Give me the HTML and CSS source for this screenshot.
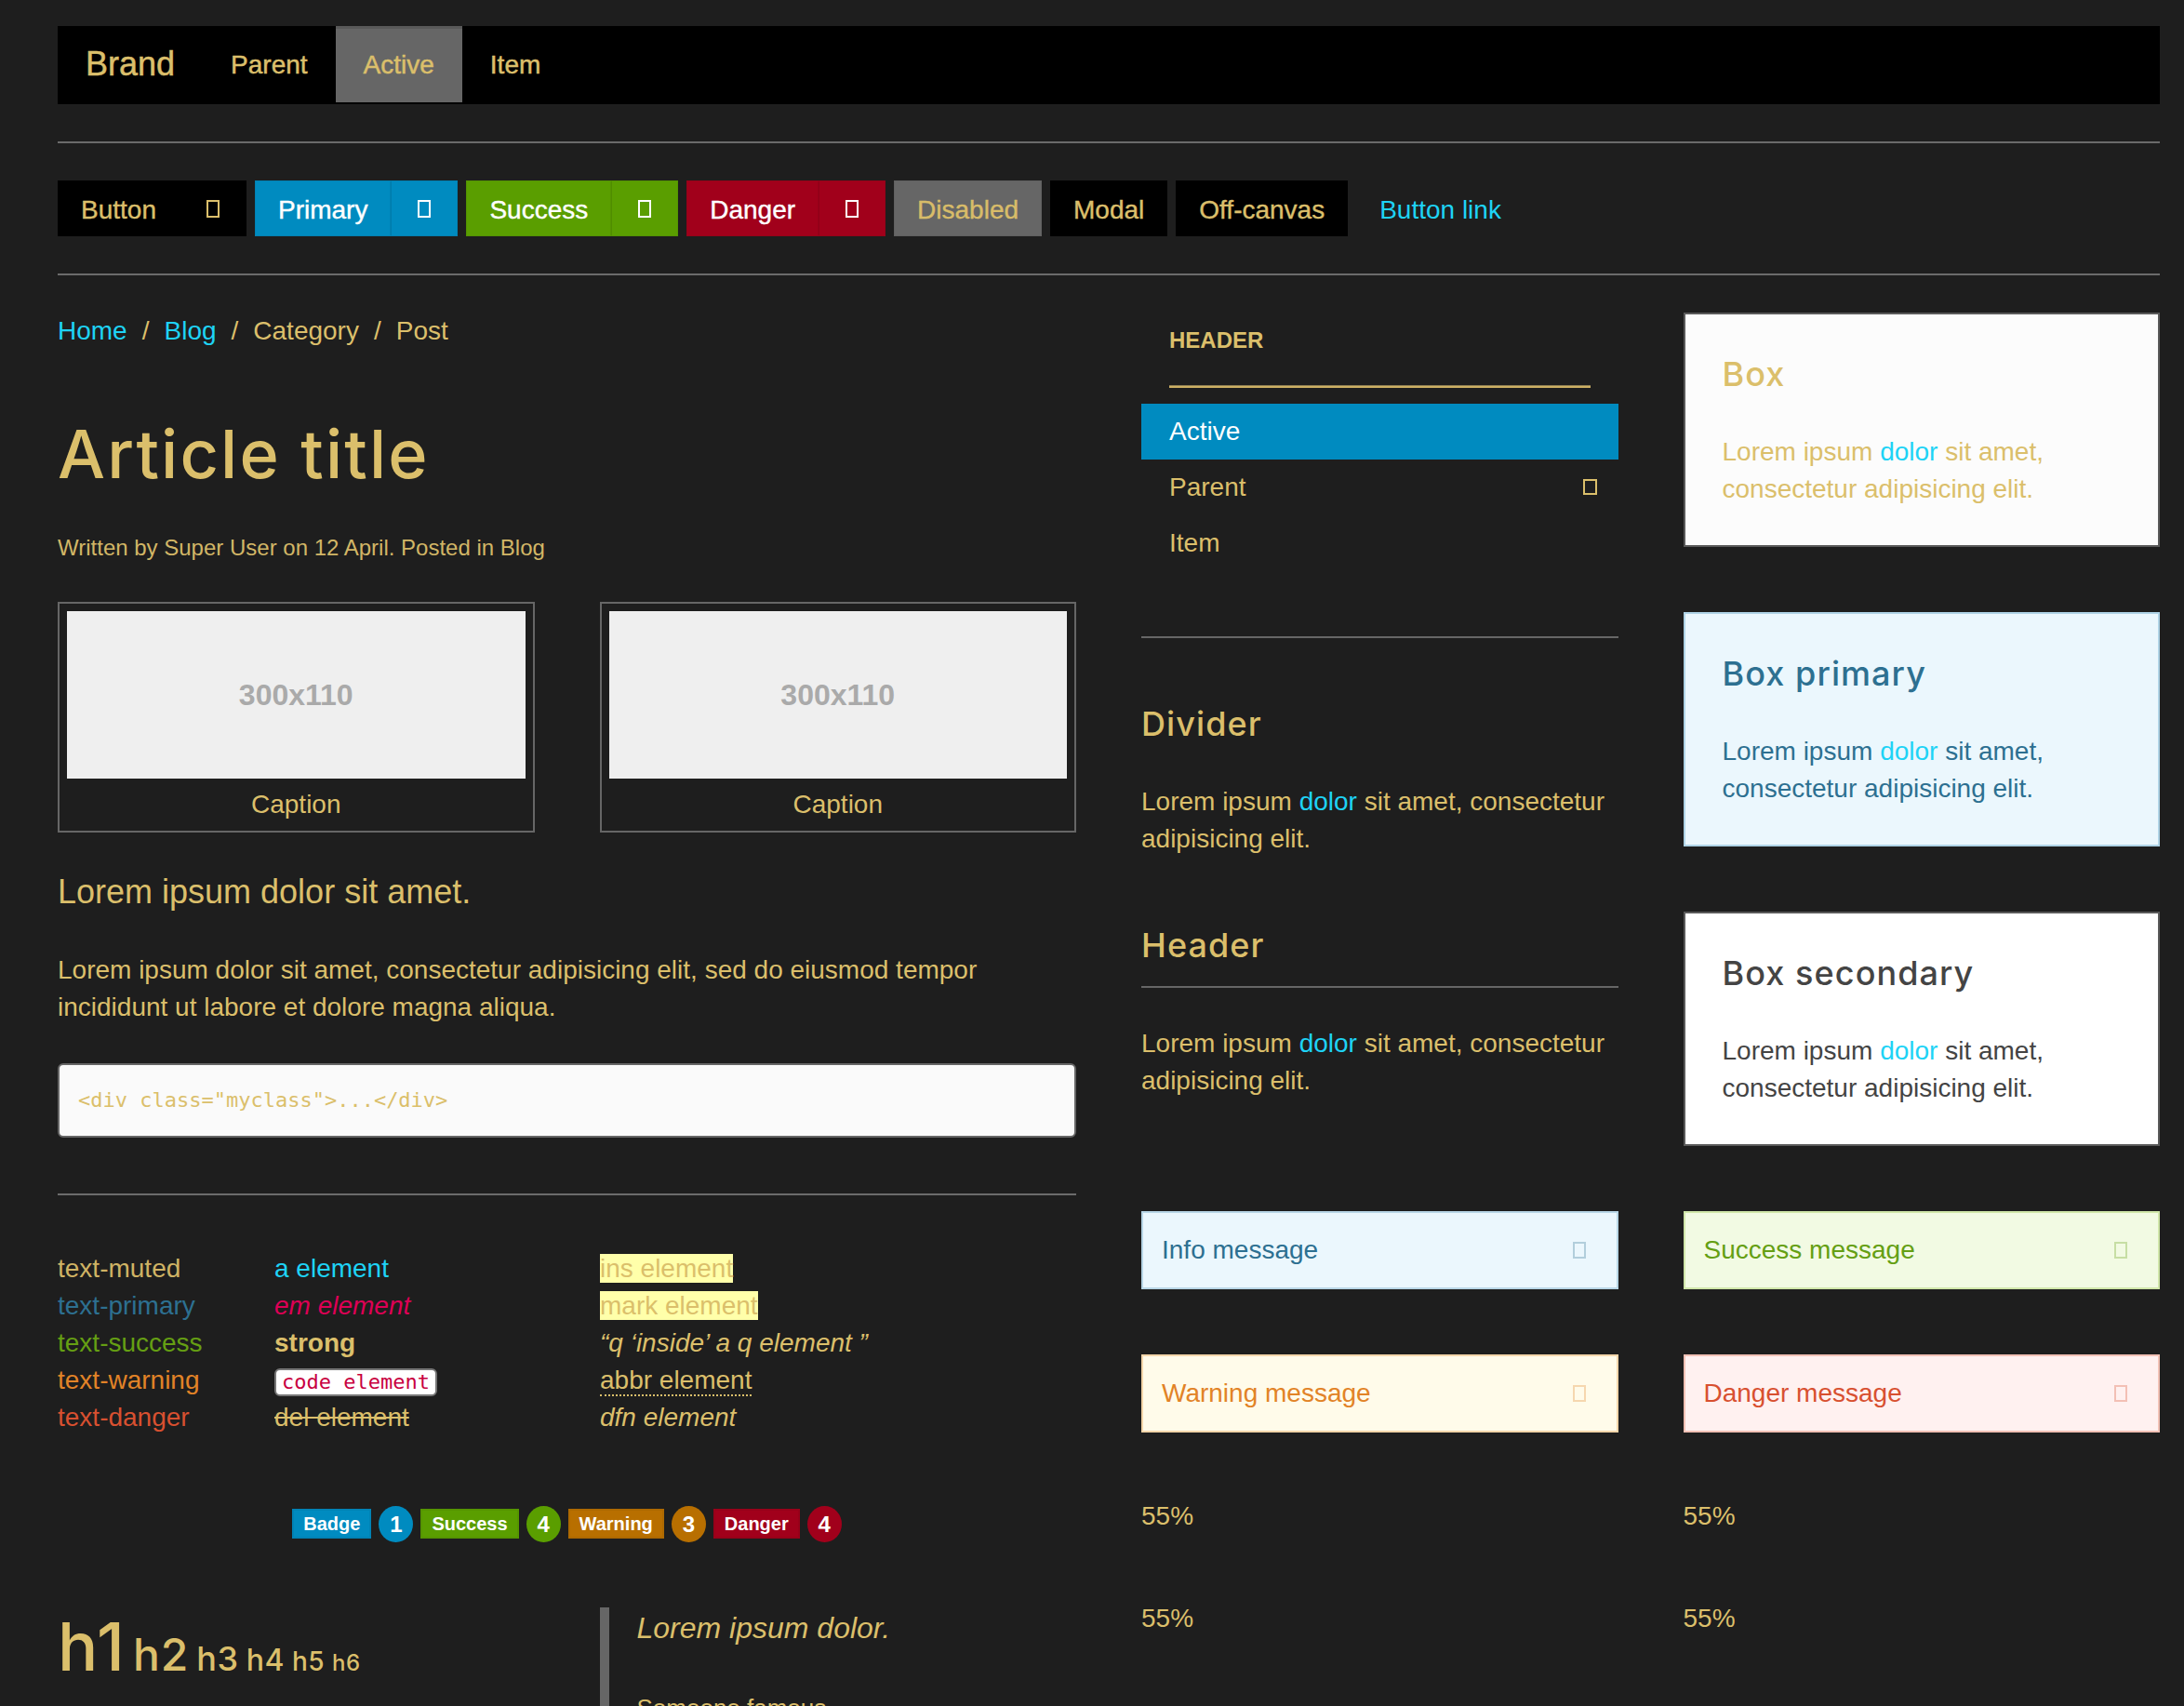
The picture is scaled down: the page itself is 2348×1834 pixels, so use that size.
FILE: index.html
```html
<!DOCTYPE html>
<html lang="en">
<head>
<meta charset="utf-8">
<title>Theme test</title>
<link rel="stylesheet" href="styles.css">
</head>
<body>
<div class="page">
  <nav class="navbar">
    <a class="brand">Brand</a>
    <ul class="navbar-nav">
      <li><a>Parent</a></li>
      <li class="active"><a>Active</a></li>
      <li><a>Item</a></li>
    </ul>
  </nav>

  <hr class="rule">

  <div class="buttons">
    <div class="btn-group"><a class="btn">Button</a><a class="btn btn-icon"><span class="tofu"></span></a></div>
    <div class="btn-group"><a class="btn btn-primary">Primary</a><a class="btn btn-primary btn-icon"><span class="tofu"></span></a></div>
    <div class="btn-group"><a class="btn btn-success">Success</a><a class="btn btn-success btn-icon"><span class="tofu"></span></a></div>
    <div class="btn-group"><a class="btn btn-danger">Danger</a><a class="btn btn-danger btn-icon"><span class="tofu"></span></a></div>
    <a class="btn btn-disabled">Disabled</a>
    <a class="btn">Modal</a>
    <a class="btn">Off-canvas</a>
    <a class="btn btn-link">Button link</a>
  </div>

  <hr class="rule">

  <div class="main">
    <div class="col-left">
      <ul class="breadcrumb">
        <li><a>Home</a></li>
        <li><a>Blog</a></li>
        <li><span>Category</span></li>
        <li><span>Post</span></li>
      </ul>

      <h1 class="article-title">Article title</h1>
      <p class="meta">Written by Super User on 12 April. Posted in Blog</p>

      <div class="figures">
        <figure class="thumb">
          <div class="ph">300x110</div>
          <figcaption class="thumb-caption">Caption</figcaption>
        </figure>
        <figure class="thumb">
          <div class="ph">300x110</div>
          <figcaption class="thumb-caption">Caption</figcaption>
        </figure>
      </div>

      <p class="lead">Lorem ipsum dolor sit amet.</p>
      <p class="para">Lorem ipsum dolor sit amet, consectetur adipisicing elit, sed do eiusmod tempor incididunt ut labore et dolore magna aliqua.</p>

      <pre class="code-block">&lt;div class="myclass"&gt;...&lt;/div&gt;</pre>

      <hr class="rule rule-wide">

      <div class="text-grid">
        <div class="tg-col">
          <div class="t-muted">text-muted</div>
          <div class="t-primary">text-primary</div>
          <div class="t-success">text-success</div>
          <div class="t-warning">text-warning</div>
          <div class="t-danger">text-danger</div>
        </div>
        <div class="tg-col">
          <div><a>a element</a></div>
          <div><em class="em">em element</em></div>
          <div><strong>strong</strong></div>
          <div><code class="code">code element</code></div>
          <div><del>del element</del></div>
        </div>
        <div class="tg-col">
          <div><ins class="hl">ins element</ins></div>
          <div><mark class="hl">mark element</mark></div>
          <div><span class="q">&ldquo;q &lsquo;inside&rsquo; a q element &rdquo;</span></div>
          <div><abbr class="abbr">abbr element</abbr></div>
          <div><dfn>dfn element</dfn></div>
        </div>
      </div>

      <div class="badges">
        <span class="badge b-blue">Badge</span>
        <span class="badge-n b-blue">1</span>
        <span class="badge b-green">Success</span>
        <span class="badge-n b-green">4</span>
        <span class="badge b-orange">Warning</span>
        <span class="badge-n b-orange">3</span>
        <span class="badge b-red">Danger</span>
        <span class="badge-n b-red">4</span>
      </div>

      <div class="heading-row">
        <div class="hrow"><span class="hx h1">h1</span> <span class="hx h2">h2</span> <span class="hx h3">h3</span> <span class="hx h4">h4</span> <span class="hx h5">h5</span> <span class="hx h6">h6</span></div>
        <blockquote class="quote">
          <p>Lorem ipsum dolor.</p>
          <small>Someone famous</small>
        </blockquote>
      </div>
    </div>

    <div class="col-right">
      <div class="mid-stack">
        <ul class="side-nav">
          <li class="nav-header">Header</li>
          <li class="nav-rule"></li>
          <li class="nav-active"><a>Active</a></li>
          <li><a>Parent<span class="tofu tofu-nav"></span></a></li>
          <li><a>Item</a></li>
        </ul>

        <div class="panel panel-divider">
          <h3 class="panel-title">Divider</h3>
          <p>Lorem ipsum <a>dolor</a> sit amet, consectetur adipisicing elit.</p>
        </div>

        <div class="panel panel-header">
          <h3 class="panel-title">Header</h3>
          <p>Lorem ipsum <a>dolor</a> sit amet, consectetur adipisicing elit.</p>
        </div>
      </div>

      <div class="box-stack">
        <div class="box">
          <h3 class="panel-title">Box</h3>
          <p>Lorem ipsum <a>dolor</a> sit amet, consectetur adipisicing elit.</p>
        </div>
        <div class="box box-primary">
          <h3 class="panel-title">Box primary</h3>
          <p>Lorem ipsum <a>dolor</a> sit amet, consectetur adipisicing elit.</p>
        </div>
        <div class="box box-secondary">
          <h3 class="panel-title">Box secondary</h3>
          <p>Lorem ipsum <a>dolor</a> sit amet, consectetur adipisicing elit.</p>
        </div>
      </div>

      <div class="alert alert-info"><span>Info message</span><span class="close"><span class="tofu"></span></span></div>
      <div class="alert alert-success"><span>Success message</span><span class="close"><span class="tofu"></span></span></div>
      <div class="alert alert-warning"><span>Warning message</span><span class="close"><span class="tofu"></span></span></div>
      <div class="alert alert-danger"><span>Danger message</span><span class="close"><span class="tofu"></span></span></div>

      <div class="progress-label">55%</div>
      <div class="progress-label">55%</div>
      <div class="progress-label">55%</div>
      <div class="progress-label">55%</div>
    </div>
  </div>
</div>
</body>
</html>
```

FILE: styles.css
```css
* { box-sizing: border-box; }

html, body {
  margin: 0;
  background: #1e1e1e;
}

body {
  font-family: "Liberation Sans", Arial, sans-serif;
  font-size: 28px;
  line-height: 40px;
  color: #dbbf6b;
}

a { color: #1ed3f6; text-decoration: none; }
p { margin: 0; }
ul { list-style: none; margin: 0; padding: 0; }

.page {
  padding: 28px 26px 0 62px;
}

/* Navbar */
.navbar {
  display: flex;
  align-items: flex-start;
  height: 84px;
  background: #000;
}
.brand {
  display: block;
  height: 82px;
  line-height: 82px;
  padding: 0 30px;
  font-size: 36px;
  color: #dbbf6b;
  -webkit-text-stroke: 0.5px currentColor;
}
.navbar-nav { display: flex; }
.navbar-nav a {
  display: block;
  height: 82px;
  line-height: 84px;
  padding: 0 30px;
  color: #dbbf6b;
  -webkit-text-stroke: 0.5px currentColor;
}
.navbar-nav .active a {
  background: #666;
  box-shadow: inset 0 3px 0 rgba(0,0,0,.12);
}

.rule {
  border: 0;
  height: 2px;
  background: #6b6b6b;
  margin: 40px 0;
}
.rule-wide { margin: 60px 0 59px; }

/* Buttons */
.buttons {
  display: flex;
  align-items: center;
  gap: 9px;
}
.btn-group { display: flex; }
.btn {
  display: block;
  height: 60px;
  line-height: 62px;
  padding: 0 24px;
  border: 1px solid rgba(0,0,0,.06);
  background: #000;
  color: #dbbf6b;
  font-size: 28px;
  white-space: nowrap;
  -webkit-text-stroke: 0.4px currentColor;
}
.btn-icon {
  width: 72px;
  padding: 0;
  display: flex;
  align-items: center;
  justify-content: center;
  border-left: 1px solid rgba(0,0,0,.1);
}
.btn-primary { background: #008bc0; color: #fff; }
.btn-success { background: #5a9e00; color: #fff; }
.btn-danger { background: #a1001b; color: #fff; }
.btn-disabled { background: #666; color: #d8bc69; }
.btn-link {
  background: transparent;
  border-color: transparent;
  color: #1ed3f6;
  -webkit-text-stroke: 0;
}

.tofu {
  display: inline-block;
  width: 14px;
  height: 19px;
  border: 2px solid currentColor;
}

/* Main grid */
.main {
  display: grid;
  grid-template-columns: 1fr 1fr;
  column-gap: 70px;
  align-items: start;
}

.breadcrumb { display: flex; }
.breadcrumb li + li::before {
  content: "/";
  margin: 0 16px;
  color: #dbbf6b;
}

.article-title,
.panel-title,
.hx {
  font-family: Inter, "Open Sans", sans-serif;
  font-weight: 500;
  letter-spacing: .03em;
}

.article-title {
  margin: 70px 0 0;
  font-size: 72px;
  line-height: 84px;
}

.meta {
  margin-top: 41px;
  font-size: 24px;
  line-height: 36px;
  color: #d2b666;
}

.figures {
  display: grid;
  grid-template-columns: 1fr 1fr;
  column-gap: 70px;
  margin-top: 40px;
}
.thumb {
  margin: 0;
  border: 2px solid #666;
  padding: 8px;
  text-align: center;
}
.ph {
  height: 180px;
  background: #efefef;
  display: flex;
  align-items: center;
  justify-content: center;
  font-weight: bold;
  font-size: 32px;
  color: #aaa;
}
.thumb-caption { padding-top: 8px; }

.lead {
  margin-top: 40px;
  font-size: 36px;
  line-height: 48px;
}
.para { margin-top: 40px; }

.code-block {
  margin: 40px 0 0;
  padding: 20px;
  border: 2px solid #666;
  border-radius: 6px;
  background: #fafafa;
  font-family: "DejaVu Sans Mono", "Liberation Mono", monospace;
  font-size: 22px;
  line-height: 36px;
  color: #dbbf6b;
}

.text-grid {
  display: grid;
  grid-template-columns: 163px 280px 1fr;
  column-gap: 70px;
}
.t-muted { color: #cfb364; }
.t-primary { color: #2d7091; }
.t-success { color: #659f13; }
.t-warning { color: #e28327; }
.t-danger { color: #d85030; }
.em { color: #dd0055; }
.code {
  display: inline-block;
  height: 30px;
  line-height: 26px;
  padding: 0 6px;
  border: 2px solid #777;
  border-radius: 6px;
  background: #fff;
  color: #c8003f;
  font-family: "DejaVu Sans Mono", "Liberation Mono", monospace;
  font-size: 22px;
}
.hl { background: #ffffaa; color: #dbbf6b; text-decoration: none; }
.q { font-style: italic; }
.abbr { text-decoration: none; border-bottom: 2px dotted #dbbf6b; }
dfn { font-style: italic; }

.badges {
  display: flex;
  justify-content: center;
  align-items: center;
  gap: 8px;
  height: 40px;
  margin-top: 74px;
}
.badge {
  display: block;
  height: 32px;
  line-height: 28px;
  padding: 0 10px;
  border: 2px solid rgba(0,0,0,.05);
  font-size: 20px;
  font-weight: bold;
  color: #fff;
}
.badge-n {
  display: block;
  width: 37px;
  height: 39px;
  line-height: 40px;
  border-radius: 50%;
  text-align: center;
  font-size: 24px;
  font-weight: bold;
  color: #fff;
}
.b-blue { background: #008bc0; }
.b-green { background: #5a9e00; }
.b-orange { background: #b86f00; }
.b-red { background: #a1001b; }

.heading-row {
  display: grid;
  grid-template-columns: 1fr 1fr;
  column-gap: 70px;
  margin-top: 70px;
}
.hrow { line-height: 84px; }
.hrow .hx { letter-spacing: .02em; }
.h1 { font-size: 72px; }
.h2 { font-size: 48px; }
.h3 { font-size: 36px; }
.h4 { font-size: 32px; }
.h5 { font-size: 28px; }
.h6 { font-size: 24px; }

.quote {
  margin: 0;
  border-left: 10px solid #666;
  padding-left: 30px;
  font-size: 32px;
  line-height: 44px;
  font-style: italic;
  min-height: 200px;
}
.quote p { margin-bottom: 44px; }
.quote small {
  display: block;
  font-style: normal;
  font-size: 26px;
  line-height: 40px;
}

/* Right half */
.col-right {
  display: grid;
  grid-template-columns: 1fr 1fr;
  gap: 70px;
  align-items: start;
}

.side-nav li > a,
.nav-header {
  display: block;
  padding: 10px 30px;
  line-height: 40px;
  color: #dbbf6b;
}
.nav-header {
  font-size: 24px;
  font-weight: bold;
  text-transform: uppercase;
}
.nav-rule {
  height: 3px;
  margin: 18px 30px 17px;
  background: linear-gradient(#8f7f52 0 1px, #cdb064 1px);
}
.side-nav .nav-active a {
  background: #008bc0;
  color: #fff;
}
.tofu-nav {
  float: right;
  width: 15px;
  height: 17px;
  margin: 11px -7px 0 0;
}

.panel-title {
  margin: 0 0 40px;
  font-size: 36px;
  line-height: 48px;
  color: #dbbf6b;
}
.panel-divider {
  margin-top: 70px;
  border-top: 2px solid #666;
  padding-top: 68px;
}
.panel-header { margin-top: 70px; }
.panel-header .panel-title {
  padding-bottom: 20px;
  border-bottom: 2px solid #666;
}

.box-stack {
  display: flex;
  flex-direction: column;
  gap: 70px;
}
.box {
  border: 2px solid #5a5a5a;
  background: #fcfcfc;
  padding: 40px;
}
.box-primary {
  background: #ebf7fd;
  border-color: #afd3e6;
  color: #2d7091;
}
.box-primary .panel-title { color: #2d7091; }
.box-secondary {
  background: #fff;
  color: #444;
}
.box-secondary .panel-title { color: #444; }

.alert {
  display: flex;
  justify-content: space-between;
  align-items: center;
  padding: 20px;
  border: 2px solid;
  line-height: 40px;
}
.alert .close {
  width: 40px;
  height: 40px;
  display: flex;
  align-items: center;
  justify-content: center;
  opacity: .3;
}
.alert .close .tofu { height: 18px; }
.alert-info { background: #ebf7fd; border-color: #b8d6e6; color: #2d7091; }
.alert-success { background: #f2fae3; border-color: #d0e6a9; color: #659f13; }
.alert-warning { background: #fffbea; border-color: #f4d6aa; color: #e28327; }
.alert-danger { background: #fff1f0; border-color: #f2c1b5; color: #d85030; }

.progress-label { line-height: 40px; }
```
